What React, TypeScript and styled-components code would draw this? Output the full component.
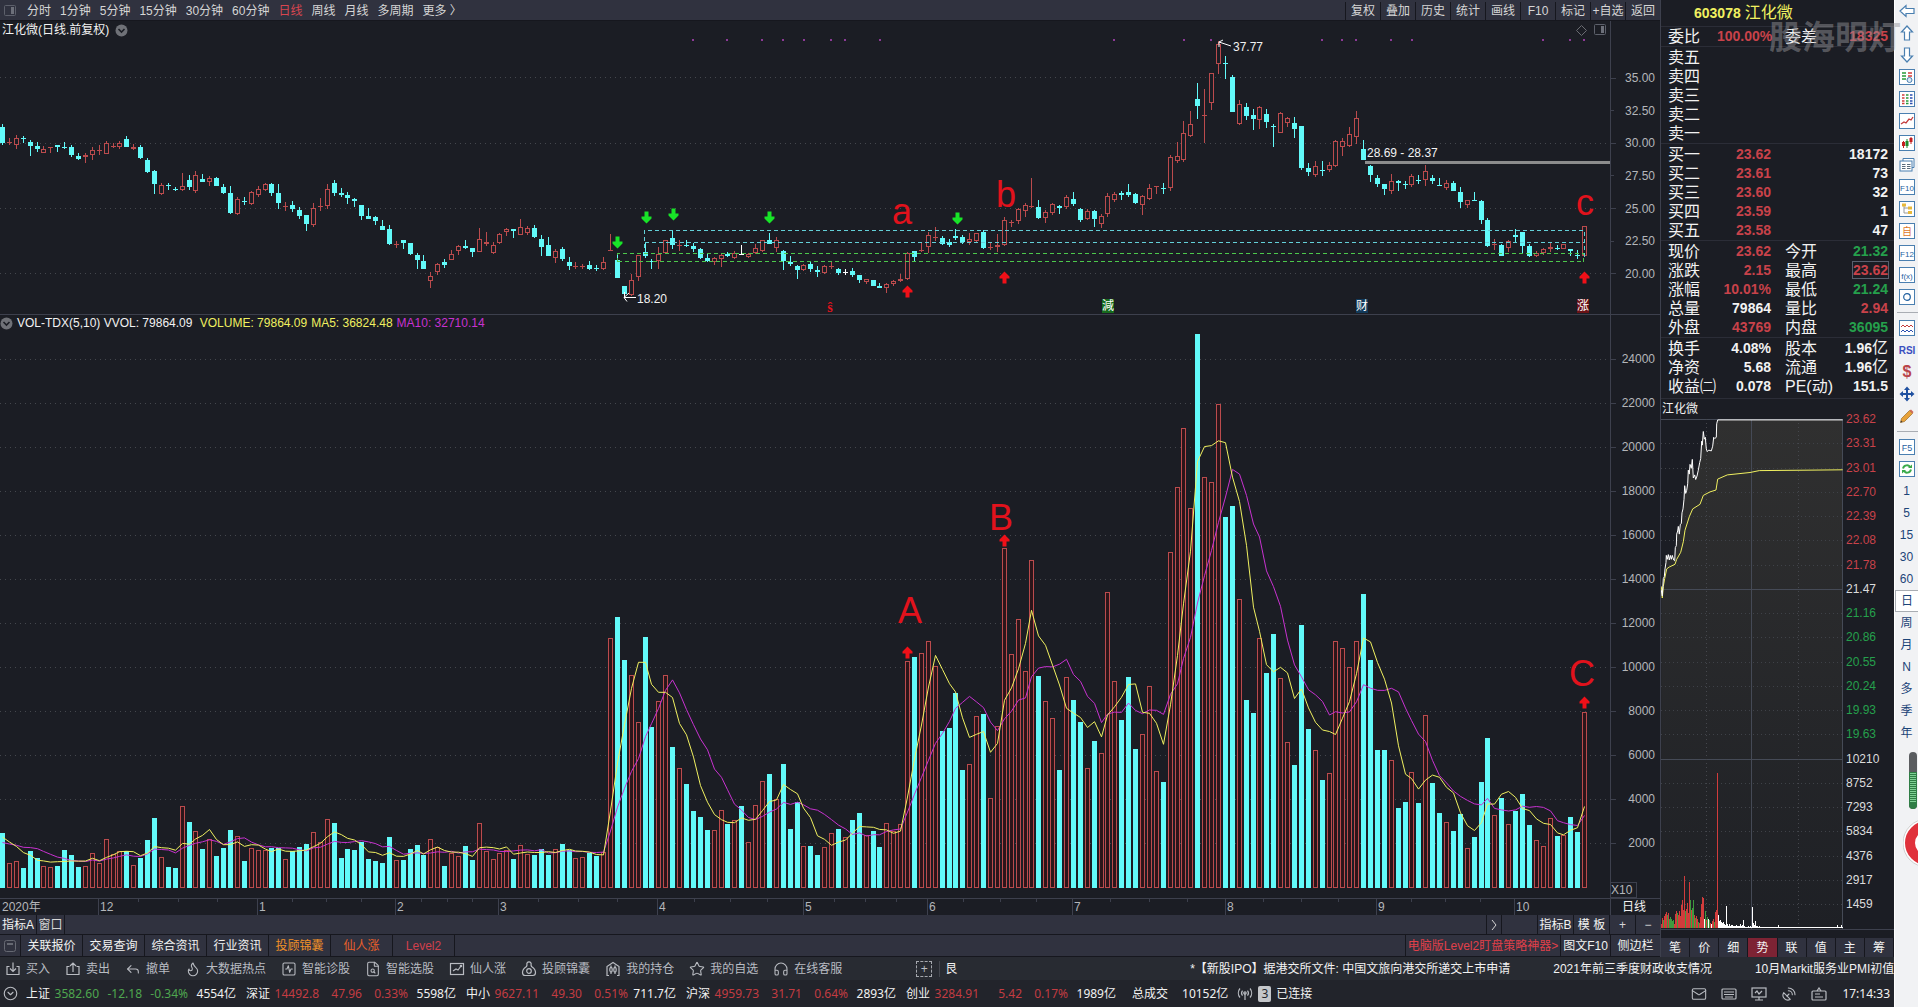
import React from "react";
import styled, { createGlobalStyle, css } from "styled-components";
import {
  CircleChevronDown,
  Flame,
  FileSearch,
  Headphones,
  Mail,
  Reply,
  SatelliteDish,
  SquareActivity,
  Star,
} from "lucide-react";

/* ---------- palette ---------- */
const C = {
  bg: "#1b1d24",
  bar: "#30323f",
  edge: "#16171e",
  line: "#3d404d",
  text: "#d6d6d6",
  white: "#f2f2f2",
  red: "#c8424a",
  green: "#25a04c",
  cyan: "#62fafa",
  candle: "#bb4b4d",
  yellow: "#f0f060",
  magenta: "#c832d0",
};

const PLOT_W = 1610;
const PRICE_TOP = 21;
const PRICE_H = 293;
const VOL_TOP = 315;
const VOL_H = 583;
const BASE_Y = 888;
const STEP = 6.909;

const barX = (i: number) => Math.round(STEP * i);

/* ---------- data ---------- */

// volume bar heights in thirds of a pixel, signed: negative = falling day
const VOL: number[] = [
  -164, 76, 82, -59, -110, -89, 67, 64, -65, -113, -98, -62, 67, 106, 76, 148, 103, 111, -112, 70,
  -89, -143, -209, 94, -62, -59, 245, -197, 172, -116, 148, -95, -119, -173, 157, -80, 121, 113, 113, -119,
  -119, 88, -110, -122, -131, 169, 139, 208, -194, -89, -116, -113, -137, -86, -80, -74, -152, 85, -83, -116,
  -128, -98, 148, 123, -65, 104, 97, -125, -83, 196, 112, 88, 106, 115, -86, 130, 103, -98, -116, -98,
  118, -133, -115, 91, 94, -106, -97, 108, 751, -812, -683, 640, 499, -752, -482, 562, 640, -422, 361, -311,
  -230, -212, -173, 175, 235, -191, 205, -245, 139, 250, 322, -341, 268, -371, -176, -257, 127, -125, -98, 124,
  166, -176, 154, -203, -224, 160, -170, -122, 196, 172, 193, 682, -692, 706, 742, 667, -470, -479, -584, -353,
  373, 517, -521, 271, 487, 1019, 703, 808, 652, 984, -635, 562, 511, -353, 634, -563, -497, 361, -440, 406,
  889, 622, -503, -632, -416, 463, 607, 352, -317, 1009, 1204, 1381, 1141, -1661, 1234, 1219, 1453, -1112, -1145, 868,
  -563, -524, 751, -644, -761, 631, 439, -368, -788, -476, 415, -323, 346, 742, 721, 664, 742, -881, -683, -413,
  -413, 385, -239, -257, 349, -254, 520, -314, -224, 199, -170, -221, 121, -152, -317, -449, 220, -269, 193, -230,
  -281, -188, 145, 127, 211, -155, 160, -212, -167, 529,
];

// high, body top, body bottom, low — in thirds of a pixel from the top of the window
const CANDLES = `372 381 429 436|414 427 430 434|405 415 434 446|408 414 418 430|420 426 437 467|426 438 448 456|438 446 458 460|441 442 444 458|435 435 442 456|426 441 444 447
435 441 465 470|458 468 478 480|460 464 472 488|441 451 464 479|436 451 453 466|424 430 461 462|429 438 441 444|424 428 440 448|408 417 440 442|433 442 448 450
435 441 474 476|474 480 516 518|511 513 551 582|549 556 583 585|549 556 559 570|561 566 570 573|519 557 571 573|525 541 561 570|513 526 572 578|522 537 545 546
529 533 545 559|530 534 557 559|553 561 578 582|558 579 639 641|590 598 643 644|591 603 607 616|573 575 613 615|558 566 584 591|549 553 569 574|549 552 578 587
552 579 608 627|605 617 621 634|603 615 628 637|621 630 647 656|645 646 671 692|610 623 674 680|594 617 621 632|553 566 617 627|540 549 578 587|564 579 584 592
576 585 593 612|594 596 604 620|614 616 647 659|624 648 656 658|648 651 664 675|661 678 689 690|675 687 732 734|722 733 735 744|720 721 730 746|728 730 762 764
759 766 781 806|765 783 806 808|817 829 843 863|789 793 815 825|777 787 795 804|750 763 779 781|735 739 752 766|720 737 743 748|743 745 757 770|684 718 755 757
696 727 733 738|727 734 760 762|699 701 728 732|684 688 695 708|687 688 693 713|657 682 704 706|679 685 700 704|675 684 710 714|706 717 741 768|711 736 767 769
747 752 773 788|741 747 777 782|771 785 797 810|785 798 801 806|792 799 801 807|783 795 808 811|795 804 808 812|771 785 807 810|702 750 752 753|762 780 833 835
857 859 882 890|822 840 884 888|765 766 832 843|729 756 769 774|776 782 785 806|742 761 783 806|720 721 758 762|689 714 734 746|720 734 738 752|720 735 738 741
728 738 746 755|744 747 773 776|760 774 782 785|772 775 785 795|762 764 778 801|756 763 768 770|753 758 775 777|735 762 765 765|760 763 770 775|732 745 758 761
720 721 754 756|699 721 731 732|711 721 743 756|749 752 782 809|768 785 791 797|796 799 811 836|792 794 811 813|784 793 808 815|798 810 815 832|796 799 818 822
786 799 802 808|804 808 819 825|808 815 817 824|803 812 825 832|825 826 839 849|837 838 846 851|840 841 857 859|850 858 863 864|850 853 864 879|840 844 853 858
822 836 842 845|756 758 838 840|752 754 772 783|729 749 753 756|696 706 742 760|681 711 715 722|708 713 731 734|716 727 734 740|687 708 713 719|706 710 727 732
699 717 725 736|699 700 724 726|690 697 744 748|727 740 742 750|702 734 741 755|651 661 736 738|660 666 669 680|624 626 664 672|609 614 634 650|534 619 622 624
600 621 653 656|630 637 655 668|609 611 638 644|616 619 625 641|585 592 622 628|576 597 611 617|624 627 660 665|627 634 658 661|630 633 656 680|642 647 673 683
579 589 643 650|576 583 601 607|572 579 584 600|552 576 584 590|579 582 609 611|585 589 616 644|552 565 596 599|558 559 562 583|550 565 568 582|465 471 563 572
426 469 482 490|363 400 479 485|333 373 409 411|249 297 317 357|267 346 349 429|219 220 308 329|123 133 193 221|168 190 193 237|225 231 335 336|300 313 371 374
308 321 347 360|326 345 356 390|318 322 359 386|326 342 366 384|372 377 380 441|336 340 398 400|351 355 368 380|350 369 386 414|378 378 503 509|489 503 515 527
483 497 524 530|483 510 513 528|486 496 510 516|420 423 499 501|414 424 442 468|381 403 439 441|333 355 412 431|420 447 480 481|495 498 524 546|526 535 551 560
551 553 567 585|522 544 572 581|541 544 548 572|543 552 555 566|522 529 554 560|525 541 544 551|495 514 541 557|525 534 543 552|534 555 558 558|540 550 563 571
543 549 572 573|561 576 605 624|600 601 614 623|576 600 602 603|600 603 659 671|654 660 737 740|717 733 736 749|732 735 767 768|720 722 745 756|687 705 711 725
695 696 737 759|732 738 767 770|753 760 767 770|745 748 760 764|730 742 746 757|734 743 745 750|731 733 746 748|746 747 754 767|750 764 766 777|678 679 769 771`
  .split(/[|\n]/)
  .map((d) => d.trim().split(" ").map(Number));

// the candle differs in colour from the volume bar on these days
const RISING_OVERRIDE: Record<number, boolean> = { 110: true, 111: false, 112: true, 107: true, 122: true };
const FLAT_DAYS = new Set([107, 122]);

const heights = VOL.map((v) => Math.abs(v) / 3);
const SEED = [40, 40, 40, 40, 40, 50, 50, 50, 50];
const average = (n: number) => {
  const all = [...SEED, ...heights];
  return heights.map((_, i) => {
    const end = i + SEED.length + 1;
    return all.slice(end - n, end).reduce((a, b) => a + b, 0) / n;
  });
};
const toLine = (values: number[]) =>
  values.map((v, i) => `${barX(i) + 2.5},${(BASE_Y - v).toFixed(1)}`).join(" ");
const MA5 = toLine(average(5));
const MA10 = toLine(average(10));

const SIGNAL_DOTS = [693, 727, 762, 783, 804, 831, 845, 880, 1114, 1184, 1211, 1322, 1342, 1356, 1391, 1412, 1543, 1570, 1584];
const DOWN_ARROWS = [[617, 242], [646, 217], [673, 214], [769, 217], [957, 218]];
const UP_ARROWS_PRICE = [[907, 291], [1004, 277], [1584, 277]];
const UP_ARROWS_VOL = [[907, 652], [1004, 540], [1584, 702]];

const MONTHS: [string, number][] = [
  ["12", 98], ["1", 257], ["2", 395], ["3", 498], ["4", 657], ["5", 803],
  ["6", 927], ["7", 1072], ["8", 1225], ["9", 1376], ["10", 1514],
];

/* ---------- base ---------- */
const Global = createGlobalStyle`
  * { box-sizing: border-box; }
  html, body { margin: 0; padding: 0; background: ${C.bg}; }
  body, button, table {
    font-family: "Liberation Sans", "Noto Sans CJK SC", sans-serif;
    font-size: 12px;
    line-height: 16px;
    color: ${C.text};
  }
  button { border: 0; padding: 0; margin: 0; background: none; cursor: pointer; white-space: nowrap; }
`;

const Screen = styled.div`
  display: flex;
  min-height: 100vh;
  overflow: hidden;
  background: ${C.bg};
`;
const Desk = styled.div`
  flex: 1;
  min-width: 0;
  display: flex;
  flex-direction: column;
`;
const Upper = styled.div`
  display: flex;
`;
const MainColumn = styled.main`
  flex: 1;
  min-width: 0;
`;

/* ---------- bars ---------- */
const Bar = styled.div<{ $h: number; $drop?: boolean }>`
  display: flex;
  align-items: stretch;
  height: ${(p) => p.$h}px;
  padding-top: ${(p) => (p.$drop ? 2 : 0)}px;
  background: ${C.bar};
  border-bottom: 1px solid ${C.edge};
`;
const Periods = styled.nav`
  display: flex;
  align-items: center;
  gap: 9px;
  padding-left: 4px;
  flex: 1;
`;
const Period = styled.button<{ $active?: boolean }>`
  color: ${(p) => (p.$active ? "#d84650" : C.text)};
`;
const PanelIcon = styled.span`
  display: flex;
  width: 14px;
`;
const Spacer = styled.div`
  flex: 1;
`;
const Cell = styled.button<{ $w?: number; $color?: string; $right?: boolean }>`
  width: ${(p) => (p.$w ? `${p.$w}px` : "auto")};
  flex: none;
  display: flex;
  align-items: center;
  justify-content: center;
  color: ${(p) => p.$color || C.text};
  ${(p) =>
    p.$right
      ? css`border-right: 1px solid ${C.edge};`
      : css`border-left: 1px solid ${C.edge};`}
`;

/* ---------- charts ---------- */
const ChartRow = styled.section<{ $divided?: boolean }>`
  display: flex;
  border-bottom: ${(p) => (p.$divided ? `1px solid ${C.line}` : "0")};
`;
const Plot = styled.div<{ $h: number }>`
  position: relative;
  flex: 1;
  min-width: 0;
  height: ${(p) => p.$h}px;
`;
const Canvas = styled.svg`
  display: block;
  width: 100%;
  height: 100%;
`;
const PlotTitle = styled.div<{ $pad: number; $h: number; $gap: number }>`
  position: absolute;
  top: 0;
  left: 0;
  display: flex;
  align-items: center;
  gap: ${(p) => p.$gap}px;
  height: ${(p) => p.$h}px;
  padding-left: ${(p) => p.$pad}px;
  color: ${C.white};
  white-space: pre;
`;
const Tint = styled.span<{ $c: string }>`
  color: ${(p) => p.$c};
`;
const PlotTools = styled.div`
  position: absolute;
  top: 3px;
  right: 3px;
  display: flex;
  gap: 6px;
`;
const Note = styled.span<{ $x: number; $y: number }>`
  position: absolute;
  left: ${(p) => (p.$x / PLOT_W) * 100}%;
  top: ${(p) => p.$y}px;
  transform: translateY(-50%);
  color: ${C.white};
  white-space: pre;
`;
const Letter = styled(Note)`
  transform: translate(-50%, -50%);
  font-size: 36px;
  line-height: 40px;
  color: #e2121c;
`;
const Tag = styled(Note)<{ $bg: string }>`
  transform: translate(-50%, -50%);
  line-height: 14px;
  color: #fff;
  background: ${(p) => p.$bg};
`;
const SmallS = styled(Note)`
  transform: translate(-50%, -50%);
  font-family: "Liberation Serif", serif;
  font-size: 14px;
  font-weight: 700;
  color: #e2121c;
`;
const Axis = styled.div<{ $top: number }>`
  width: 50px;
  flex: none;
  padding-top: ${(p) => p.$top}px;
  border-left: 1px solid ${C.line};
  color: #b4b6ba;
`;
const AxisList = styled.div<{ $h: number }>`
  display: flex;
  flex-direction: column;
  justify-content: space-between;
  height: ${(p) => p.$h}px;
`;
const AxisLabel = styled.div<{ $minor?: boolean }>`
  display: flex;
  align-items: center;
  justify-content: space-between;
  padding-right: 5px;
  line-height: 14px;
  &::before {
    content: "";
    width: ${(p) => (p.$minor ? 3 : 5)}px;
    height: 1px;
    background: ${C.line};
  }
`;
const Unit = styled.div`
  width: 26px;
  margin-top: 32px;
  line-height: 14px;
  border: 1px solid ${C.line};
  border-left: 0;
  color: #b4b6ba;
`;
const DateRow = styled.div`
  display: flex;
  height: 17px;
  border-top: 1px solid ${C.line};
`;
const DateTrack = styled.div`
  position: relative;
  flex: 1;
`;
const DateLabel = styled.span<{ $x: number }>`
  position: absolute;
  top: 0;
  left: ${(p) => (p.$x / PLOT_W) * 100}%;
  padding-left: 2px;
  color: #b4b6ba;
`;
const DateUnit = styled.div`
  width: 50px;
  padding-right: 3px;
  border-left: 1px solid ${C.line};
  text-align: center;
  color: ${C.white};
`;

/* ---------- quote panel ---------- */
const Quote = styled.aside`
  position: relative;
  width: 234px;
  flex: none;
  display: flex;
  flex-direction: column;
  border-left: 1px solid ${C.line};
`;
const QuoteHead = styled.h1`
  margin: 0;
  height: 26px;
  display: flex;
  align-items: center;
  gap: 4px;
  padding-left: 33px;
  font-size: 14px;
  color: ${C.yellow};
`;
const StockName = styled.span`
  font-size: 16px;
  font-weight: 400;
`;
const Section = styled.div<{ $tight?: boolean }>`
  border-top: 1px solid #2b2d37;
  padding-top: ${(p) => (p.$tight ? 0 : 1)}px;
`;
const QuoteTable = styled.table`
  width: 100%;
  table-layout: fixed;
  border-collapse: collapse;
`;
const QuoteRow = styled.tr`
  height: 19px;
`;
const Label = styled.th<{ $second?: boolean }>`
  width: ${(p) => (p.$second ? 69 : 56)}px;
  padding: 0 0 0 ${(p) => (p.$second ? 14 : 7)}px;
  font-size: 16px;
  line-height: 19px;
  font-weight: 400;
  text-align: left;
  white-space: nowrap;
  color: ${C.white};
`;
const Value = styled.td<{ $c: string; $last?: boolean }>`
  padding: 0 ${(p) => (p.$last ? 6 : 0)}px 0 0;
  font-size: 14px;
  line-height: 19px;
  font-weight: 700;
  text-align: right;
  color: ${(p) => p.$c};
`;
const Boxed = styled.span`
  outline: 1px solid #59606e;
`;
const Hundred = styled.span`
  font-size: 16px;
  line-height: 16px;
  font-weight: 400;
`;
const Watermark = styled.div`
  position: absolute;
  top: 18px;
  left: 108px;
  z-index: 2;
  font-family: "Noto Sans CJK SC", sans-serif;
  font-size: 33px;
  line-height: 34px;
  font-weight: 700;
  white-space: nowrap;
  color: rgba(150, 150, 155, 0.48);
  pointer-events: none;
`;
const MiniBlock = styled.div`
  display: flex;
  margin-top: 2px;
  border-top: 1px solid #2b2d37;
  border-bottom: 1px solid ${C.line};
`;
const MiniMain = styled.div`
  flex: 1;
  min-width: 0;
`;
const MiniTitle = styled.div`
  height: 20px;
  padding: 2px 0 0 1px;
  color: ${C.white};
`;
const MiniCanvas = styled.svg`
  display: block;
  width: 100%;
  height: 510px;
`;
const MiniAxis = styled.div`
  width: 51px;
  height: 501px;
  margin-top: 12px;
  padding-left: 3px;
  display: flex;
  flex-direction: column;
  justify-content: space-between;
`;
const MiniTabs = styled.div`
  display: flex;
  height: 19px;
  margin-top: auto;
  background: ${C.bar};
`;
const MiniTab = styled.button<{ $on?: boolean }>`
  flex: 1;
  color: ${C.white};
  border-right: 1px solid ${C.edge};
  background: ${(p) => (p.$on ? "#7d2334" : "transparent")};
`;

/* ---------- footer ---------- */
const ToolRow = styled.div`
  display: flex;
  align-items: center;
  height: 23px;
  padding-left: 5px;
  background: #282b32;
  color: ${C.white};
`;
const Tool = styled.button`
  display: flex;
  align-items: center;
  gap: 5px;
  margin-right: 15px;
  color: #b9bcc2;
`;
const AddBox = styled.button`
  width: 16px;
  height: 16px;
  margin-left: 59px;
  border: 1px dashed #a5a8ae;
  line-height: 12px;
  color: #b9bcc2;
`;
const Divided = styled.span`
  margin-left: 7px;
  padding-left: 5px;
  border-left: 1px solid #44474f;
`;
const Ticker = styled.div`
  flex: 1;
  min-width: 0;
  display: flex;
  gap: 43px;
  padding-left: 233px;
  overflow: hidden;
  white-space: nowrap;
`;
const StatusRow = styled.footer`
  display: flex;
  align-items: center;
  height: 27px;
  padding: 0 4px 0 2px;
  background: #22242b;
  font-family: "Noto Sans", "Noto Sans CJK SC", sans-serif;
  color: ${C.white};
`;
const IndexGroup = styled.div`
  display: grid;
  grid-template-columns: 28px 45px 43px 46px 48px;
  width: 220px;
  flex: none;
  text-align: right;
  white-space: nowrap;
`;
const IndexName = styled.span`
  text-align: left;
`;
const StatusIcon = styled.span<{ $w: number }>`
  display: flex;
  justify-content: center;
  width: ${(p) => p.$w}px;
  flex: none;
  color: #b9bcc2;
`;
const Total = styled.span<{ $gap: number }>`
  margin-left: ${(p) => p.$gap}px;
  white-space: nowrap;
`;
const Count = styled.span`
  width: 13px;
  margin: 0 5px 0 4px;
  border-radius: 2px;
  text-align: center;
  color: #22242b;
  background: #c4c6ca;
`;

/* ---------- icon strip ---------- */
const Strip = styled.nav`
  position: relative;
  width: 24px;
  flex: none;
  display: flex;
  flex-direction: column;
  overflow: hidden;
  background: #f1f2f4;
  border-left: 1px solid #fff;
`;
const StripButton = styled.button<{ $on?: boolean }>`
  height: 22px;
  flex: none;
  display: flex;
  align-items: center;
  justify-content: center;
  color: #1c4478;
  background: ${(p) => (p.$on ? "#fff" : "transparent")};
  border: ${(p) => (p.$on ? "1px solid #a9adb3" : "0")};
  border-right: 0;
`;
const StripRule = styled.div`
  height: 1px;
  margin: 4px 0 4px 2px;
  flex: none;
  background: #a9adb3;
`;
const Gauge = styled.svg`
  position: absolute;
  right: 0;
  top: 752px;
`;

/* ---------- drawings ---------- */
const PanelGlyph = () => (
  <svg width="13" height="12" viewBox="0 0 13 12" fill="none">
    <rect x="0.5" y="0.5" width="11" height="10" rx="1" stroke="#5d606b" />
    <rect x="7" y="2" width="3" height="7" fill="#6d707a" />
  </svg>
);
const ChevronBadge = () => (
  <svg width="13" height="13" viewBox="0 0 13 13">
    <circle cx="6.5" cy="6.5" r="6" fill="#6f7177" />
    <path d="M3.5 5l3 3 3-3" fill="none" stroke="#1b1d24" strokeWidth="1.6" />
  </svg>
);
const line = { fill: "none", stroke: "currentColor", strokeWidth: 1.2 } as const;
const BuyGlyph = () => (
  <svg width="16" height="16" viewBox="0 0 16 16" {...line}>
    <path d="M4.5 5.5H2v8h12v-8h-2.500M8 1.500v9M5 7.500l3 3 3-3" />
  </svg>
);
const SellGlyph = () => (
  <svg width="16" height="16" viewBox="0 0 16 16" {...line}>
    <path d="M4.500 5.500H2v8h12v-8h-2.500M8 11V2M5 5l3-3 3 3" />
  </svg>
);
const TrendGlyph = () => (
  <svg width="16" height="16" viewBox="0 0 16 16" {...line}>
    <rect x="1.500" y="2.500" width="13" height="11" />
    <path d="M4 10l3-2 2 1 3-4" />
    <circle cx="12" cy="5" r="0.700" />
  </svg>
);
const BagGlyph = () => (
  <svg width="16" height="16" viewBox="0 0 16 16" {...line}>
    <path d="M5.500 5.500L6 4a2.200 2.200 0 1 1 4 0l.500 1.500c3 2 4 4 4 6 0 2-1 3-2.500 3H4c-1.500 0-2.500-1-2.500-3 0-2 1-4 4-6z" />
    <circle cx="8" cy="10" r="2.300" />
  </svg>
);
const HoldGlyph = () => (
  <svg width="16" height="16" viewBox="0 0 16 16" {...line}>
    <path d="M4 14.500H2v-9L8 1.500l6 4v9h-2M6 4.500v2M6 11v2M10 4.500v2M10 11v2" />
    <ellipse cx="6" cy="8.700" rx="1.200" ry="2.300" />
    <ellipse cx="10" cy="8.700" rx="1.200" ry="2.300" />
  </svg>
);
const AntennaGlyph = () => (
  <svg width="16" height="14" viewBox="0 0 16 14" {...line}>
    <path d="M3 1.500a7 7 0 0 0 0 9M5.500 3.500a4 4 0 0 0 0 5M13 1.500a7 7 0 0 1 0 9M10.500 3.500a4 4 0 0 1 0 5M8 6v7" />
    <circle cx="8" cy="6" r="1.200" />
  </svg>
);
const KeyboardGlyph = () => (
  <svg width="16" height="14" viewBox="0 0 16 14" {...line}>
    <rect x="1" y="2" width="14" height="10" rx="1" />
    <path d="M3 5h10M3 7.500h10M4 10h8" />
  </svg>
);
const ScreenGlyph = () => (
  <svg width="16" height="14" viewBox="0 0 16 14" {...line}>
    <rect x="1" y="1" width="14" height="9" />
    <path d="M4 6l2-2 2 3 3-3M8 10v3M4 13h8" />
  </svg>
);
const CaseGlyph = () => (
  <svg width="16" height="14" viewBox="0 0 16 14" {...line}>
    <rect x="1" y="4" width="14" height="9" rx="1" />
    <path d="M6 4l2-3 2 3M4 7h5M4 10h8" />
  </svg>
);

const ArrowShape = ({ x, y, up }: { x: number; y: number; up?: boolean }) => {
  const s = up ? -1 : 1;
  return (
    <path
      transform={`translate(${x + 0.5} ${y + 0.5}) scale(1 ${s})`}
      d="M-2 -6h4v5h3v2l-5 5-5-5v-2h3z"
      fill={up ? "#f01018" : "#18e428"}
    />
  );
};

const StripArrow = ({ turn }: { turn: number }) => (
  <svg width="16" height="16" viewBox="0 0 16 16">
    <path
      transform={`rotate(${turn} 8 8)`}
      d="M8 1l5.500 6H10.500v8h-5V7H2.500z"
      fill="#fff"
      stroke="#4a7fb0"
      strokeWidth="1.200"
    />
  </svg>
);
const Frame = ({ children }: { children?: React.ReactNode }) => (
  <svg width="16" height="16" viewBox="0 0 16 16">
    <rect x="0.500" y="0.500" width="15" height="15" fill="#fff" stroke="#4a7fb0" />
    {children}
  </svg>
);
const FrameText = ({ text, color = "#1f5f9f", size = 9 }: { text: string; color?: string; size?: number }) => (
  <Frame>
    <text x="8" y="11.500" textAnchor="middle" fontSize={size} fontFamily="Liberation Sans, Noto Sans CJK SC, sans-serif" fill={color}>
      {text}
    </text>
  </Frame>
);
const stroke = (d: string, c: string, w = 1) => <path d={d} stroke={c} strokeWidth={w} fill="none" />;

/* ---------- chart drawings ---------- */
const gridLine = { stroke: "#44474d", strokeDasharray: "1 4", shapeRendering: "crispEdges" as const };

const PriceCanvas = () => (
  <Canvas viewBox={`0 ${PRICE_TOP} ${PLOT_W} ${PRICE_H}`} preserveAspectRatio="none" role="img" aria-label="日线">
    {[77.5, 143.5, 208.5, 273.5].map((y) => (
      <line key={y} x1="0" x2={PLOT_W} y1={y} y2={y} {...gridLine} />
    ))}
    {SIGNAL_DOTS.map((x) => (
      <rect key={x} x={x - 1} y="39" width="2" height="2" fill="#8c3a96" />
    ))}
    <g shapeRendering="crispEdges">
      {CANDLES.map(([h, t, b, l], i) => {
        const rising = i in RISING_OVERRIDE ? RISING_OVERRIDE[i] : VOL[i] > 0;
        const x = barX(i);
        const top = Math.round(t / 3);
        const bottom = Math.max(Math.round(b / 3), top + 1);
        const hi = Math.round(h / 3);
        const lo = Math.round(l / 3);
        const color = FLAT_DAYS.has(i) ? "#fff" : rising ? C.candle : C.cyan;
        return (
          <g key={i} fill={color}>
            {hi < top && <rect x={x + 2} y={hi} width="1" height={top - hi} />}
            {lo > bottom && <rect x={x + 2} y={bottom} width="1" height={lo - bottom} />}
            {rising && bottom - top > 2 ? (
              <rect x={x + 0.5} y={top + 0.5} width="4" height={bottom - top - 1} fill={C.bg} stroke={C.candle} />
            ) : (
              <rect x={x} y={top} width="5" height={bottom - top} />
            )}
          </g>
        );
      })}
    </g>
    <g fill="none" strokeDasharray="4 3" shapeRendering="crispEdges">
      <path d="M644.500 248V230.500H1584.500V258M644.500 242.500H1584.500" stroke="#63d0d8" />
      <path d="M617.500 262V253.500H1583.500M617.500 261.500H1583.500V254" stroke="#4cc84c" />
    </g>
    <rect x="1365" y="161" width="245" height="3" fill="#8c8c8c" />
    <path d="M1231 46l-12-4M1219 47v-5l4-2M636 297.500h-12M629 293l-5 4.500 3 4M624.500 292v6" stroke="#fff" fill="none" />
    {DOWN_ARROWS.map(([x, y]) => (
      <ArrowShape key={x} x={x} y={y} />
    ))}
    {UP_ARROWS_PRICE.map(([x, y]) => (
      <ArrowShape key={x} x={x} y={y} up />
    ))}
  </Canvas>
);

const VolumeCanvas = () => (
  <Canvas viewBox={`0 ${VOL_TOP} ${PLOT_W} ${VOL_H}`} preserveAspectRatio="none" role="img" aria-label="VOL">
    {Array.from({ length: 12 }, (_, k) => 359.5 + k * 44).map((y) => (
      <line key={y} x1="0" x2={PLOT_W} y1={y} y2={y} {...gridLine} />
    ))}
    <g shapeRendering="crispEdges">
      {VOL.map((v, i) => {
        const h = Math.round(Math.abs(v) / 3);
        const x = barX(i);
        return v < 0 ? (
          <rect key={i} x={x} y={BASE_Y - h} width="5" height={h} fill={C.cyan} />
        ) : (
          <rect key={i} x={x + 0.5} y={BASE_Y - h + 0.5} width="4" height={h - 1} fill="#2c151a" stroke={C.candle} />
        );
      })}
    </g>
    <polyline points={MA10} fill="none" stroke={C.magenta} />
    <polyline points={MA5} fill="none" stroke={C.yellow} />
    {UP_ARROWS_VOL.map(([x, y]) => (
      <ArrowShape key={x} x={x} y={y} up />
    ))}
  </Canvas>
);

const DateTicks = () => (
  <Canvas viewBox="0 0 1610 16" preserveAspectRatio="none" aria-hidden="true">
    {MONTHS.map(([, x], i) => {
      const next = i + 1 < MONTHS.length ? MONTHS[i + 1][1] : null;
      return (
        <g key={x} fill={C.line} shapeRendering="crispEdges">
          <rect x={x} y="0" width="1" height="16" />
          {next !== null &&
            [1, 2, 3].map((q) => <rect key={q} x={Math.round(x + ((next - x) * q) / 4)} y="0" width="1" height="3" />)}
        </g>
      );
    })}
  </Canvas>
);

/* intraday line: horizontal unit 1/3 px, vertical unit 1/2.583 px */
const mini = (pts: number[]) => {
  const out: string[] = [];
  for (let i = 0; i < pts.length; i += 2) {
    out.push(`${(pts[i] / 3 - 11).toFixed(1)},${((pts[i + 1] - 49) / 2.583 + 0.5).toFixed(1)}`);
  }
  return out.join(" ");
};
const MINI_PRICE = mini([
  34, 490, 37, 505, 40, 460, 43, 455, 45, 435, 48, 418, 49, 400, 52, 410, 55, 398, 58, 412, 61, 400, 64, 410, 67, 400,
  71, 412, 74, 414, 76, 380, 79, 375, 80, 345, 83, 337, 85, 325, 88, 345, 91, 320, 94, 318, 96, 290, 99, 280, 102, 255,
  104, 220, 107, 240, 110, 232, 113, 215, 115, 180, 118, 190, 120, 165, 124, 175, 127, 152, 130, 200, 134, 192, 137, 204,
  141, 195, 145, 180, 149, 160, 152, 150, 155, 105, 157, 115, 160, 80, 163, 100, 166, 95, 169, 125, 172, 132, 176, 128,
  184, 130, 188, 118, 191, 95, 194, 98, 199, 95, 200, 60, 203, 50, 578, 50,
]);
const MINI_AVG = mini([
  34, 480, 37, 510, 40, 480, 44, 460, 50, 435, 58, 430, 75, 423, 80, 410, 92, 392, 100, 365, 105, 335, 118, 300, 128, 280,
  150, 268, 160, 245, 180, 236, 198, 231, 203, 203, 232, 192, 300, 186, 328, 181, 465, 180, 578, 179,
]);
// minute volumes: height in px, colour key
const MINI_VOL =
  "4r 10r 8g 12r 14r 16r 13g 15r 9g 11g 9g 7g 8g 4r 14r 17r 15g 13r 17r 12r 23r 28r 18r 52r 17g 19r 25r 15r 46r 28g 18r 20g 28g 13r 10g 12r 9r 6g 5r 11r 24r 31r 30r 9w 17g 8r 11g 9w 8g 5r 4w 7r 9r 6g 16r 18r 155r 13w 7w 8w 6w 5w 6w 4w 3w 22w 4w 2w 4w 2w 3w 3w 2w 2w 2w 3w 2w 2w 2w 4w 2w 3w 8w 2w 1w 1w 1w 2w 1w 2w 1w 21w 5w 3w 7w 2w 2w 1w 2w 1w".split(
    " "
  );
const MINI_COLOR: Record<string, string> = { r: "#d23c3c", g: "#3e9a3e", w: "#fff" };

const MiniChart = () => (
  <MiniCanvas viewBox="0 0 182 510" preserveAspectRatio="none" role="img" aria-label="分时">
    <defs>
      <linearGradient id="miniFill" x1="0" y1="0" x2="0" y2="1">
        <stop offset="0" stopColor="#303030" />
        <stop offset="1" stopColor="#1e2025" />
      </linearGradient>
    </defs>
    <polygon points={`0,510 ${MINI_PRICE} 182,0 182,510`} fill="url(#miniFill)" />
    {Array.from({ length: 21 }, (_, k) => Math.round(k * 24.25) + 0.5).map((y, k) => (
      <line
        key={y}
        x1="0"
        x2="182"
        y1={y}
        y2={y}
        stroke={k % 7 === 0 ? "#454a56" : "#3f4248"}
        strokeDasharray={k % 7 === 0 ? undefined : "1 3"}
        shapeRendering="crispEdges"
      />
    ))}
    <path d="M45.500 0V510M137.500 0V510" stroke="#45474d" strokeDasharray="1 3" />
    <path d="M90.500 0V510M181.500 0V510" stroke="#454a56" />
    <g shapeRendering="crispEdges">
      {MINI_VOL.map((m, i) => {
        const h = parseInt(m, 10);
        return <rect key={i} x={i} y={509 - h} width="1" height={h} fill={MINI_COLOR[m.slice(-1)]} />;
      })}
      <rect x="100" y="508" width="82" height="1" fill="#fff" />
      <rect x="117" y="506" width="1" height="3" fill="#fff" />
      <rect x="176" y="506" width="1" height="3" fill="#fff" />
      <rect x="180" y="506" width="1" height="3" fill="#fff" />
    </g>
    <polyline points={MINI_AVG} fill="none" stroke={C.yellow} />
    <polyline points={MINI_PRICE} fill="none" stroke="#fff" />
  </MiniCanvas>
);

/* ---------- quote panel ---------- */
type Pair = [string, string, string, string?, string?, string?];
const R = C.red;
const G = C.green;
const W = C.white;

const SECTIONS: { tight?: boolean; rows: Pair[] }[] = [
  { tight: true, rows: [["委比", "100.00%", R, "委差", "18325", R]] },
  { rows: [["卖五", "", W], ["卖四", "", W], ["卖三", "", W], ["卖二", "", W], ["卖一", "", W]] },
  {
    rows: [
      ["买一", "23.62", R, "", "18172", W],
      ["买二", "23.61", R, "", "73", W],
      ["买三", "23.60", R, "", "32", W],
      ["买四", "23.59", R, "", "1", W],
      ["买五", "23.58", R, "", "47", W],
    ],
  },
  {
    rows: [
      ["现价", "23.62", R, "今开", "21.32", G],
      ["涨跌", "2.15", R, "最高", "[23.62]", R],
      ["涨幅", "10.01%", R, "最低", "21.24", G],
      ["总量", "79864", W, "量比", "2.94", R],
      ["外盘", "43769", R, "内盘", "36095", G],
    ],
  },
  {
    rows: [
      ["换手", "4.08%", W, "股本", "1.96亿", W],
      ["净资", "5.68", W, "流通", "1.96亿", W],
      ["收益㈡", "0.078", W, "PE(动)", "151.5", W],
    ],
  },
];

const renderValue = (v?: string) => {
  if (!v) return null;
  if (v.startsWith("[")) return <Boxed>{v.slice(1, -1)}</Boxed>;
  if (v.endsWith("亿"))
    return (
      <>
        {v.slice(0, -1)}
        <Hundred>亿</Hundred>
      </>
    );
  return v;
};

const MINI_LABELS = [
  "23.62", "23.31", "23.01", "22.70", "22.39", "22.08", "21.78", "21.47", "21.16", "20.86", "20.55",
  "20.24", "19.93", "19.63", "10210", "8752", "7293", "5834", "4376", "2917", "1459",
];

const QuotePanel = () => (
  <Quote>
    <Watermark>股海明灯</Watermark>
    <QuoteHead>
      603078 <StockName>江化微</StockName>
    </QuoteHead>
    {SECTIONS.map((s, k) => (
      <Section key={k} $tight={s.tight}>
        <QuoteTable>
          <tbody>
            {s.rows.map(([l1, v1, c1, l2, v2, c2]) => (
              <QuoteRow key={l1}>
                <Label scope="row">{l1}</Label>
                <Value $c={c1}>{v1}</Value>
                <Label as={l2 ? "th" : "td"} $second>{l2}</Label>
                <Value $c={c2 || W} $last>
                  {renderValue(v2)}
                </Value>
              </QuoteRow>
            ))}
          </tbody>
        </QuoteTable>
      </Section>
    ))}
    <MiniBlock>
      <MiniMain>
        <MiniTitle>江化微</MiniTitle>
        <MiniChart />
      </MiniMain>
      <MiniAxis>
        {MINI_LABELS.map((t, i) => (
          <Tint key={t} $c={i < 7 ? R : i > 7 && i < 14 ? G : "#dcdcdc"}>
            {t}
          </Tint>
        ))}
      </MiniAxis>
    </MiniBlock>
    <MiniTabs>
      {["笔", "价", "细", "势", "联", "值", "主", "筹"].map((t) => (
        <MiniTab key={t} $on={t === "势"}>
          {t}
        </MiniTab>
      ))}
    </MiniTabs>
  </Quote>
);

/* ---------- footer content ---------- */
const iconProps = { size: 16, strokeWidth: 1.6 };
const TOOLS: [string, React.ReactNode][] = [
  ["买入", <BuyGlyph />],
  ["卖出", <SellGlyph />],
  ["撤单", <Reply {...iconProps} />],
  ["大数据热点", <Flame {...iconProps} />],
  ["智能诊股", <SquareActivity {...iconProps} />],
  ["智能选股", <FileSearch {...iconProps} />],
  ["仙人涨", <TrendGlyph />],
  ["投顾锦囊", <BagGlyph />],
  ["我的持仓", <HoldGlyph />],
  ["我的自选", <Star {...iconProps} />],
  ["在线客服", <Headphones {...iconProps} />],
];

const UP = "#c23c42";
const DOWN = "#4fa64f";
const INDEXES: [string, string, string, string, string, string][] = [
  ["上证", "3582.60", "-12.18", "-0.34%", "4554亿", DOWN],
  ["深证", "14492.8", "47.96", "0.33%", "5598亿", UP],
  ["中小", "9627.11", "49.30", "0.51%", "711.7亿", UP],
  ["沪深", "4959.73", "31.71", "0.64%", "2893亿", UP],
  ["创业", "3284.91", "5.42", "0.17%", "1989亿", UP],
];

const Footer = () => (
  <>
    <ToolRow>
      {TOOLS.map(([name, icon]) => (
        <Tool key={name}>
          {icon}
          {name}
        </Tool>
      ))}
      <AddBox aria-label="添加">+</AddBox>
      <Divided>艮</Divided>
      <Ticker>
        <span>*【新股IPO】据港交所文件: 中国文旅向港交所递交上市申请</span>
        <span>2021年前三季度财政收支情况</span>
        <span>10月Markit服务业PMI初值</span>
      </Ticker>
    </ToolRow>
    <StatusRow>
      <StatusIcon $w={16}>
        <CircleChevronDown size={15} strokeWidth={1.8} />
      </StatusIcon>
      <Total $gap={8} />
      {INDEXES.map(([n, p, d, pct, amt, c]) => (
        <IndexGroup key={n}>
          <IndexName>{n}</IndexName>
          <Tint $c={c}>{p}</Tint>
          <Tint $c={c}>{d}</Tint>
          <Tint $c={c}>{pct}</Tint>
          <span>{amt}</span>
        </IndexGroup>
      ))}
      <Total $gap={6}>总成交</Total>
      <Total $gap={14}>10152亿</Total>
      <Total $gap={8} />
      <StatusIcon $w={18}>
        <AntennaGlyph />
      </StatusIcon>
      <Count>3</Count>
      <span>已连接</span>
      <Spacer />
      <StatusIcon $w={30}>
        <Mail size={16} strokeWidth={1.6} />
      </StatusIcon>
      <StatusIcon $w={30}>
        <KeyboardGlyph />
      </StatusIcon>
      <StatusIcon $w={30}>
        <ScreenGlyph />
      </StatusIcon>
      <StatusIcon $w={30}>
        <SatelliteDish size={16} strokeWidth={1.6} />
      </StatusIcon>
      <StatusIcon $w={30}>
        <CaseGlyph />
      </StatusIcon>
      <Total $gap={8}>17:14:33</Total>
    </StatusRow>
  </>
);

/* ---------- strip content ---------- */
const STRIP_TOP: React.ReactNode[] = [
  <StripArrow turn={-90} />,
  <StripArrow turn={0} />,
  <StripArrow turn={180} />,
  <Frame>
    {stroke("M3 4h4M3 7h4M3 10h4", "#2a9a3a", 1.6)}
    {stroke("M9 4h4M9 7h4", "#d23c3c", 1.6)}
    <circle cx="10.500" cy="11" r="2.500" fill="#dbe9f5" stroke="#4a7fb0" />
  </Frame>,
  <Frame>
    {stroke("M3 4h2.500M3 7h2.500M3 10h2.500M3 12.500h2.500", "#d23c3c", 1.4)}
    {stroke("M7 4h2.500M7 7h2.500M7 10h2.500M7 12.500h2.500", "#2a9a3a", 1.4)}
    {stroke("M11 4h2.500M11 7h2.500M11 10h2.500M11 12.500h2.500", "#2a4fb0", 1.4)}
  </Frame>,
  <Frame>{stroke("M2 11l3-2 2 1 3-4 2 1 2-3", "#c43c3c", 1.3)}</Frame>,
  <Frame>
    {stroke("M4.500 6v7M12 2v7", "#c41e1e", 1)}
    {stroke("M8 4v9", "#1f8a2a", 1)}
    <rect x="3" y="7" width="3" height="4" fill="#c41e1e" />
    <rect x="6.500" y="6" width="3" height="5" fill="#1f8a2a" />
    <rect x="10.500" y="3" width="3" height="4" fill="#c41e1e" />
  </Frame>,
  <svg width="16" height="16" viewBox="0 0 16 16">
    <path d="M4 4V1.500h11v9h-2" fill="#fff" stroke="#4a7fb0" />
    <rect x="1" y="4" width="12" height="10" fill="#fff" stroke="#4a7fb0" />
    {stroke("M3 7.500h3.500M8 7.500h3.500M3 9.500h3.500M8 9.500h3.500M3 11.500h3.500M8 11.500h3.500", "#5b6b7b")}
  </svg>,
  <FrameText text="F10" size={8} />,
  <Frame>
    {stroke("M5 4v8h4M5 7h4", "#9a9a9a")}
    <rect x="3" y="2.500" width="4" height="3" fill="#e8b93a" />
    <rect x="9" y="5.500" width="4" height="3" fill="#e8b93a" />
    <rect x="9" y="10" width="4" height="3" fill="#e8b93a" />
  </Frame>,
  <FrameText text="自" color="#e0782a" size={10} />,
  <FrameText text="F12" size={8} />,
  <FrameText text="f(x)" size={8} />,
  <Frame>
    <circle cx="8" cy="8" r="3.300" fill="none" stroke="#1f5f9f" strokeWidth="1.200" />
  </Frame>,
];
const STRIP_MID: React.ReactNode[] = [
  <Frame>
    {stroke("M2 7l2-2 2 2 2-2 2 2 2-2 2 2", "#c43c3c")}
    {stroke("M2 12l2-2 2 2 2-2 2 2 2-2 2 2", "#2a4fb0")}
  </Frame>,
  <svg width="18" height="14" viewBox="0 0 18 14">
    <text x="9" y="11" textAnchor="middle" fontSize="10" fontWeight="700" fontFamily="Liberation Sans, sans-serif" fill="#3a4fc0">
      RSI
    </text>
  </svg>,
  <svg width="16" height="18" viewBox="0 0 16 18">
    <text x="8" y="14" textAnchor="middle" fontSize="16" fontWeight="700" fontFamily="Liberation Sans, sans-serif" fill="#b8434a">
      $
    </text>
  </svg>,
  <svg width="16" height="16" viewBox="0 0 16 16">
    <path d="M8 0.500l3 3.500H9v3h3V5l3.500 3L12 11V9H9v3h2l-3 3.500L5 12h2V9H4v2L0.500 8 4 5v2h3V4H5z" fill="#1f50a0" />
  </svg>,
  <svg width="16" height="16" viewBox="0 0 16 16">
    <path d="M1.500 14.500l1-4 8-8 3 3-8 8z" fill="#e8a23a" stroke="#9a6a2a" strokeWidth="0.700" />
    <path d="M10.500 2.500l1.500-1 2.500 2.500-1 1.500z" fill="#d06a5a" />
    <path d="M1.500 14.500l.5-2 1.500 1.500z" fill="#333" />
  </svg>,
];
const STRIP_LOW: React.ReactNode[] = [
  <FrameText text="F5" size={9} />,
  <Frame>
    {stroke("M4 7.500c1-4 6-4 7-1M12 8.500c-1 4-6 4-7 1", "#3aaa4a", 2)}
    <path d="M9 7h4V3.500zM7 9H3v3.500z" fill="#3aaa4a" />
  </Frame>,
  "1", "5", "15", "30", "60", "日", "周", "月", "N", "多", "季", "年",
];

const IconStrip = () => (
  <Strip>
    {STRIP_TOP.map((n, i) => (
      <StripButton key={i}>{n}</StripButton>
    ))}
    <StripRule />
    {STRIP_MID.map((n, i) => (
      <StripButton key={i}>{n}</StripButton>
    ))}
    <StripRule />
    {STRIP_LOW.map((n, i) => (
      <StripButton key={i} $on={n === "日"}>
        {n}
      </StripButton>
    ))}
    <Gauge width="15" height="118" viewBox="0 0 15 118">
      <rect x="6" y="0" width="8" height="57" rx="4" fill="#5b5d60" />
      <path d="M6 20h8v33a4 4 0 0 1-8 0z" fill="#2f7d45" />
      {Array.from({ length: 15 }, (_, k) => (
        <rect key={k} x="7" y={21 + k * 2} width="6" height="1" fill="#7fd094" />
      ))}
      <circle cx="24" cy="91" r="24" fill="#fff" stroke="#cfcfcf" />
      <circle cx="24" cy="91" r="17" fill="none" stroke="#e0323c" strokeWidth="10" />
    </Gauge>
  </Strip>
);

/* ---------- page ---------- */
const PERIODS = ["分时", "1分钟", "5分钟", "15分钟", "30分钟", "60分钟", "日线", "周线", "月线", "多周期", "更多 〉"];
const ACTIONS = ["复权", "叠加", "历史", "统计", "画线", "F10", "标记", "+自选", "返回"];

export default function App() {
  return (
    <>
      <Global />
      <Screen>
        <Desk>
          <Upper>
            <MainColumn>
              <Bar $h={21} $drop>
                <Periods>
                  <PanelIcon>
                    <PanelGlyph />
                  </PanelIcon>
                  {PERIODS.map((p) => (
                    <Period key={p} $active={p === "日线"}>
                      {p}
                    </Period>
                  ))}
                </Periods>
                {ACTIONS.map((a) => (
                  <Cell key={a} $w={35}>
                    {a}
                  </Cell>
                ))}
              </Bar>

              <ChartRow $divided>
                <Plot $h={PRICE_H}>
                  <PriceCanvas />
                  <PlotTitle $pad={2} $h={18} $gap={6}>
                    <span>江化微(日线.前复权)</span>
                    <ChevronBadge />
                  </PlotTitle>
                  <PlotTools>
                    <svg width="13" height="13" viewBox="0 0 13 13">
                      <path d="M6.500 1.500l5 5-5 5-5-5z" fill="none" stroke="#6a6c72" />
                    </svg>
                    <PanelGlyph />
                  </PlotTools>
                  <Note $x={1233} $y={26}>37.77</Note>
                  <Note $x={1367} $y={132}>28.69 - 28.37</Note>
                  <Note $x={637} $y={278}>18.20</Note>
                  <Letter $x={902} $y={191}>a</Letter>
                  <Letter $x={1006} $y={174}>b</Letter>
                  <Letter $x={1585} $y={182}>c</Letter>
                  <SmallS $x={830} $y={287}>ŝ</SmallS>
                  <Tag $x={1108} $y={285} $bg="#176b1e">減</Tag>
                  <Tag $x={1362} $y={285} $bg="#123a5a">财</Tag>
                  <Tag $x={1583} $y={285} $bg="#6a1216">涨</Tag>
                </Plot>
                <Axis $top={50}>
                  <AxisList $h={210}>
                    {["35.00", "32.50", "30.00", "27.50", "25.00", "22.50", "20.00"].map((t, i) => (
                      <AxisLabel key={t} $minor={i % 2 === 1}>
                        {t}
                      </AxisLabel>
                    ))}
                  </AxisList>
                </Axis>
              </ChartRow>

              <ChartRow>
                <Plot $h={VOL_H}>
                  <VolumeCanvas />
                  <PlotTitle $pad={0} $h={16} $gap={4}>
                    <ChevronBadge />
                    <span>VOL-TDX(5,10) VVOL: 79864.09 </span>
                    <Tint $c={C.yellow}>VOLUME: 79864.09</Tint>
                    <Tint $c={C.yellow}>MA5: 36824.48</Tint>
                    <Tint $c={C.magenta}>MA10: 32710.14</Tint>
                  </PlotTitle>
                  <Letter $x={910} $y={296}>A</Letter>
                  <Letter $x={1001} $y={203}>B</Letter>
                  <Letter $x={1582} $y={359}>C</Letter>
                </Plot>
                <Axis $top={37}>
                  <AxisList $h={498}>
                    {Array.from({ length: 12 }, (_, k) => 24000 - k * 2000).map((t) => (
                      <AxisLabel key={t}>{t}</AxisLabel>
                    ))}
                  </AxisList>
                  <Unit>X10</Unit>
                </Axis>
              </ChartRow>

              <DateRow>
                <DateTrack>
                  <DateTicks />
                  <DateLabel $x={0}>2020年</DateLabel>
                  {MONTHS.map(([m, x]) => (
                    <DateLabel key={m} $x={x}>
                      {m}
                    </DateLabel>
                  ))}
                </DateTrack>
                <DateUnit>日线</DateUnit>
              </DateRow>

              <Bar $h={20}>
                <Cell $w={37} $right $color={C.white}>指标A</Cell>
                <Cell $w={28} $right>窗口</Cell>
                <Spacer />
                <Cell $w={15} aria-label="展开">
                  <svg width="8" height="12" viewBox="0 0 8 12">
                    <path d="M2 1l4 5-4 5" fill="none" stroke="#d6d6d6" />
                  </svg>
                </Cell>
                <Cell $w={36} aria-label="空" />
                <Cell $w={36} $color={C.white}>指标B</Cell>
                <Cell $w={36} $color={C.white}>模 板</Cell>
                <Cell $w={26}>+</Cell>
                <Cell $w={25}>−</Cell>
              </Bar>

              <Bar $h={22}>
                <Cell $w={21} $right aria-label="面板">
                  <svg width="13" height="12" viewBox="0 0 13 12" fill="none">
                    <rect x="0.500" y="0.500" width="11" height="11" rx="2" stroke="#666973" />
                    <rect x="3" y="3" width="6" height="2" fill="#666973" />
                  </svg>
                </Cell>
                {["关联报价", "交易查询", "综合资讯", "行业资讯"].map((t) => (
                  <Cell key={t} $w={62} $right $color={C.white}>
                    {t}
                  </Cell>
                ))}
                <Cell $w={62} $right $color="#f09028">投顾锦囊</Cell>
                <Cell $w={62} $right $color="#e8602a">仙人涨</Cell>
                <Cell $w={62} $right $color="#d0404c">Level2</Cell>
                <Spacer />
                <Cell $w={155} $color="#e0404a">电脑版Level2盯盘策略神器&gt;</Cell>
                <Cell $w={50} $color={C.white}>图文F10</Cell>
                <Cell $w={50} $color={C.white}>侧边栏</Cell>
              </Bar>
            </MainColumn>
            <QuotePanel />
          </Upper>
          <Footer />
        </Desk>
        <IconStrip />
      </Screen>
    </>
  );
}
